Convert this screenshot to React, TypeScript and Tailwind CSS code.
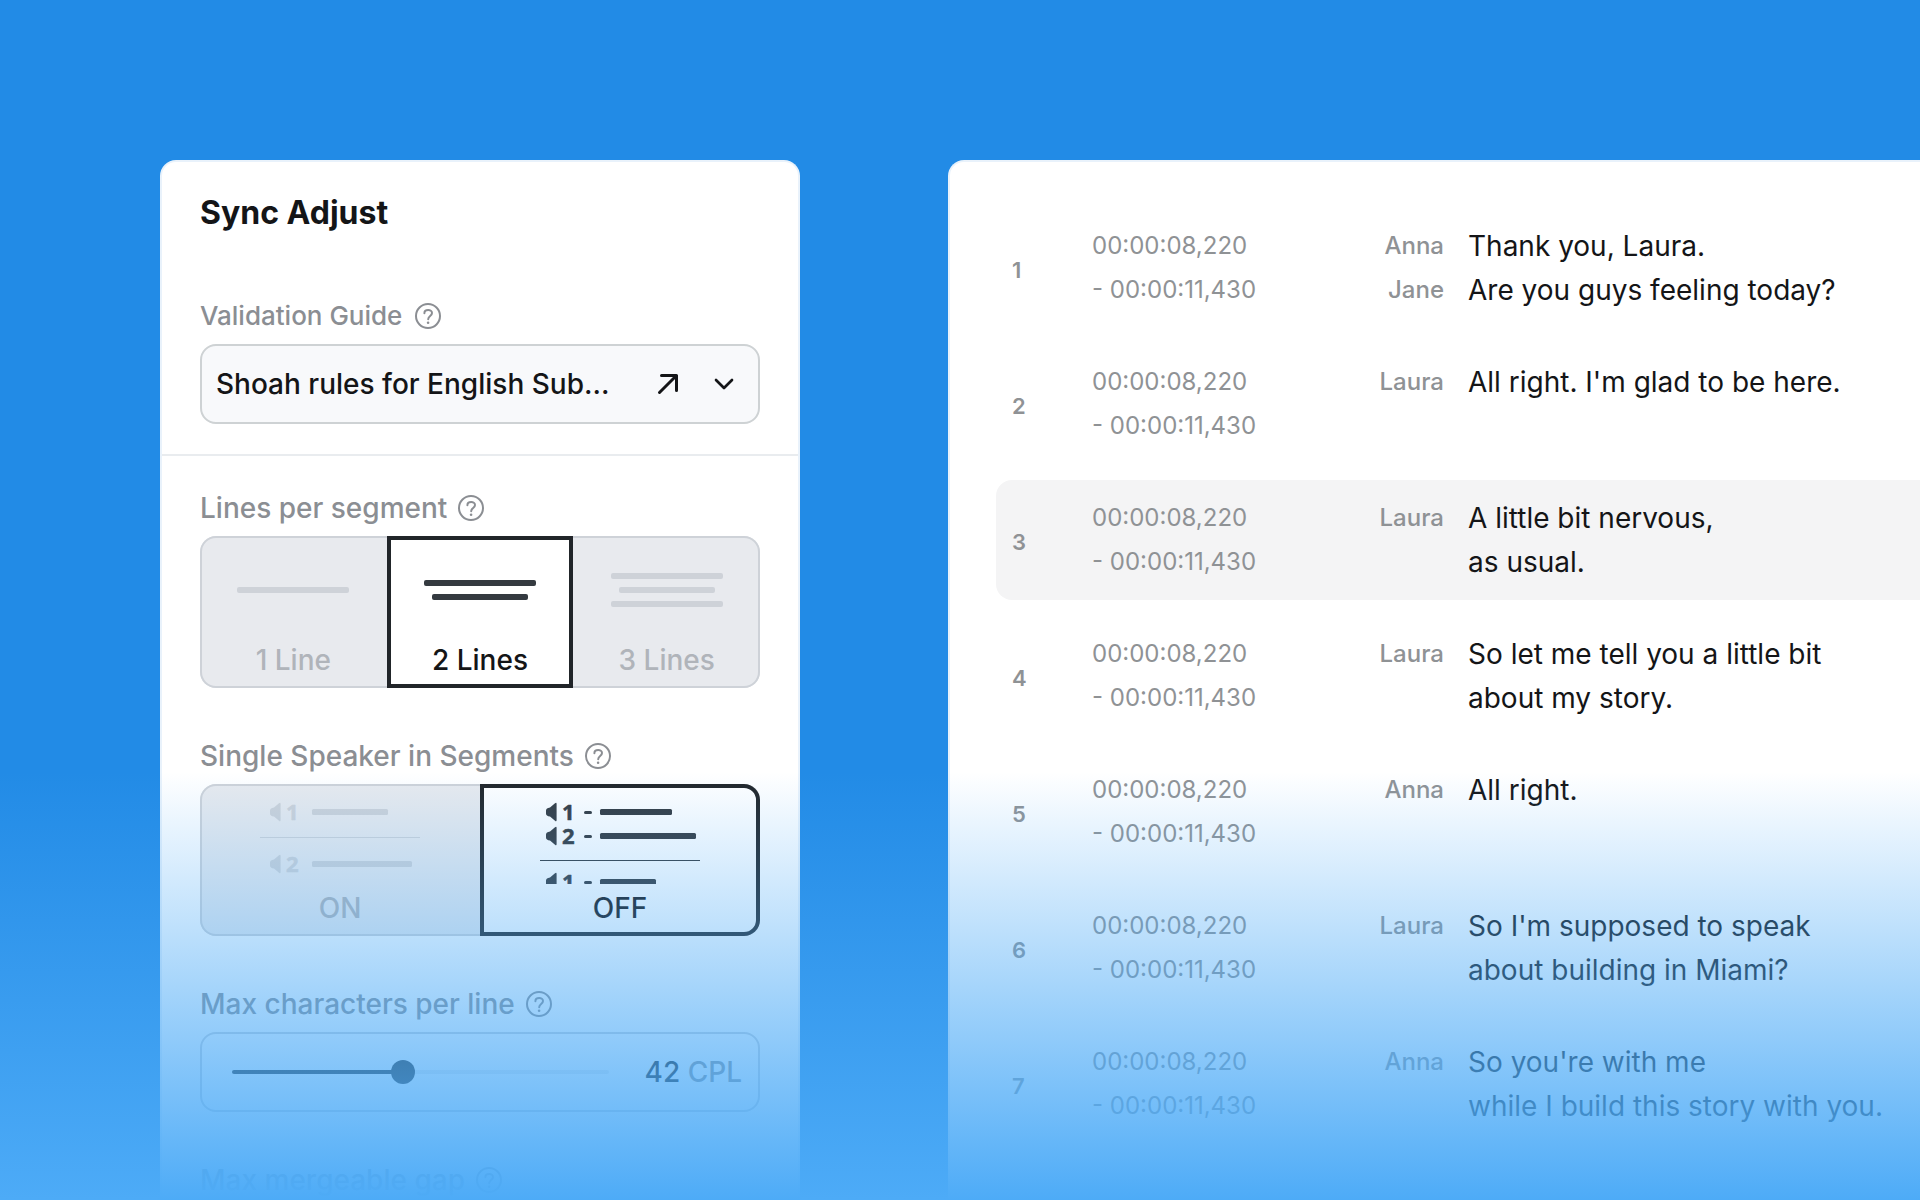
import { type ReactElement, type ReactNode, useState } from 'react';
import { ChevronDown } from 'lucide-react';
import clsx from 'clsx';

interface Segment {
  id: number;
  speakers: string[];
  lines: string[];
}

const SEGMENTS: Segment[] = [
  { id: 1, speakers: ['Anna', 'Jane'], lines: ['Thank you, Laura.', 'Are you guys feeling today?'] },
  { id: 2, speakers: ['Laura'], lines: ["All right. I'm glad to be here."] },
  { id: 3, speakers: ['Laura'], lines: ['A little bit nervous,', 'as usual.'] },
  { id: 4, speakers: ['Laura'], lines: ['So let me tell you a little bit', 'about my story.'] },
  { id: 5, speakers: ['Anna'], lines: ['All right.'] },
  { id: 6, speakers: ['Laura'], lines: ["So I'm supposed to speak", 'about building in Miami?'] },
  { id: 7, speakers: ['Anna'], lines: ["So you're with me", 'while I build this story with you.'] },
];

const CPL_MIN = 15;
const CPL_MAX = 75;

function HelpIcon(): ReactElement {
  return (
    <svg width="28" height="28" viewBox="0 0 28 28" fill="none" stroke="currentColor" strokeWidth="2">
      <circle cx="14" cy="14" r="12" />
      <path d="M10.4 11.2c0-4.2 7.6-4.2 7.6-.2 0 3-3.8 3-3.8 6.2" strokeLinecap="round" />
      <circle cx="14.1" cy="20.8" r="1.3" fill="currentColor" stroke="none" />
    </svg>
  );
}

interface FieldLabelProps {
  children: ReactNode;
  htmlFor?: string;
  id?: string;
  small?: boolean;
}

function FieldLabel({ children, htmlFor, id, small }: FieldLabelProps): ReactElement {
  return (
    <div className={clsx('mb-2 flex h-10 items-center text-[#8b8e93]', small ? 'gap-3' : 'gap-2.5')}>
      <label
        id={id}
        htmlFor={htmlFor}
        className={clsx('font-medium', small ? 'text-[26px] leading-9' : 'text-[28px] leading-10')}
      >
        {children}
      </label>
      <button type="button" aria-label="Help">
        <HelpIcon />
      </button>
    </div>
  );
}

interface OptionCellProps {
  name: string;
  label: string;
  checked: boolean;
  onSelect: () => void;
  children: ReactNode;
}

function OptionCell({ name, label, checked, onSelect, children }: OptionCellProps): ReactElement {
  return (
    <label
      className={clsx(
        'flex flex-1 cursor-pointer flex-col pb-3 first:rounded-l-2xl last:rounded-r-2xl',
        checked ? 'bg-white text-[#343a40] ring-4 ring-[#212529] ring-inset' : 'text-[#ced2d8]'
      )}
    >
      <input type="radio" name={name} checked={checked} onChange={onSelect} className="sr-only" />
      <span className="flex h-27 flex-col items-center justify-center gap-2">{children}</span>
      <span
        className={clsx('text-center text-[28px] leading-8 font-medium', checked ? 'text-[#141517]' : 'text-[#b0b4ba]')}
      >
        {label}
      </span>
    </label>
  );
}

function LineBars({ count }: { count: number }): ReactElement {
  return (
    <>
      {Array.from({ length: count }, (_, i) => (
        <span key={i} className={clsx('h-1.5 rounded-xs bg-current', i % 2 === 0 ? 'w-28' : 'w-24')} />
      ))}
    </>
  );
}

interface SpeakerRowProps {
  x: number;
  y: number;
  digit: string;
  dash?: boolean;
  barX: number;
  barWidth: number;
}

function SpeakerRow({ x, y, digit, dash, barX, barWidth }: SpeakerRowProps): ReactElement {
  return (
    <g transform={`translate(0 ${y})`}>
      <g transform={`translate(${x} 0)`}>
        <path d="M10.6 -8V8Q10.6 10.2 9 8.8L4 4.6Q0 4 0 1.5V-1.5Q0 -4 4 -4.6L9 -8.8Q10.6 -10.2 10.6 -8Z" />
        <text
          x="16"
          y="8"
          stroke="currentColor"
          strokeWidth="0.5"
          strokeLinejoin="round"
          className="font-['Open_Sans',sans-serif] text-[22px] font-bold"
        >
          {digit}
        </text>
      </g>
      {dash && <rect x="44" y="-1" width="8" height="3" rx="1.5" />}
      <rect x={barX} y="-3" width={barWidth} height="6" rx="1.5" />
    </g>
  );
}

function SyncAdjustPanel(): ReactElement {
  const [guide, setGuide] = useState('shoah-en');
  const [lineCount, setLineCount] = useState(2);
  const [singleSpeaker, setSingleSpeaker] = useState(false);
  const [cpl, setCpl] = useState(42);

  const filled = ((cpl - CPL_MIN) / (CPL_MAX - CPL_MIN)) * 100;

  return (
    <section className="w-160 shrink-0 rounded-t-2xl border-2 border-b-0 border-[#e9f2fb] bg-white">
      <div className="border-b-2 border-[#e9ecef] px-[38px] pt-7 pb-[30px]">
        <h1 className="mb-[60px] text-[32px] leading-[46px] font-bold text-[#141517]">Sync Adjust</h1>

        <FieldLabel htmlFor="guide" small>
          Validation Guide
        </FieldLabel>
        <div className="flex h-20 items-center rounded-2xl border-2 border-[#ced2d4] bg-[#f8f9fb] pr-[18px] pl-3.5 text-[#141517]">
          <select
            id="guide"
            value={guide}
            onChange={(e) => setGuide(e.target.value)}
            className="h-full min-w-0 flex-1 appearance-none text-[28px] font-medium outline-none"
          >
            <option value="shoah-en">Shoah rules for English Sub...</option>
          </select>
          <button type="button" aria-label="Open guide" className="mr-6">
            <svg
              width="32"
              height="32"
              viewBox="0 0 32 32"
              fill="none"
              stroke="currentColor"
              strokeWidth="3"
              strokeLinecap="round"
              strokeLinejoin="round"
            >
              <path d="M7.5 24.5 24.5 7.5M9.5 7.5h15v15" />
            </svg>
          </button>
          <ChevronDown size={32} strokeWidth={2} className="pointer-events-none" />
        </div>
      </div>

      <div className="px-[38px] pt-8">
        <FieldLabel id="lines-label">Lines per segment</FieldLabel>
        <div
          role="radiogroup"
          aria-labelledby="lines-label"
          className="mb-12 flex h-38 rounded-2xl bg-[#e8eaee] ring-2 ring-[#ced2d8] ring-inset"
        >
          {[1, 2, 3].map((n) => (
            <OptionCell
              key={n}
              name="lines"
              label={n === 1 ? '1 Line' : `${n} Lines`}
              checked={lineCount === n}
              onSelect={() => setLineCount(n)}
            >
              <LineBars count={n} />
            </OptionCell>
          ))}
        </div>

        <FieldLabel id="speaker-label">Single Speaker in Segments</FieldLabel>
        <div
          role="radiogroup"
          aria-labelledby="speaker-label"
          className="mb-12 flex h-38 rounded-2xl bg-[#e8eaee] ring-2 ring-[#ced2d8] ring-inset"
        >
          <OptionCell name="speaker" label="ON" checked={singleSpeaker} onSelect={() => setSingleSpeaker(true)}>
            <svg width="160" height="92" viewBox="0 0 160 92" fill="currentColor">
              <SpeakerRow x={10} y={20} digit="1" barX={52} barWidth={76} />
              <rect y="45" width="160" height="1" />
              <SpeakerRow x={10} y={72} digit="2" barX={52} barWidth={100} />
            </svg>
          </OptionCell>
          <OptionCell name="speaker" label="OFF" checked={!singleSpeaker} onSelect={() => setSingleSpeaker(false)}>
            <svg width="160" height="92" viewBox="0 0 160 92" fill="currentColor">
              <SpeakerRow x={6} y={20} digit="1" dash barX={60} barWidth={72} />
              <SpeakerRow x={6} y={44} digit="2" dash barX={60} barWidth={96} />
              <rect y="68" width="160" height="1" />
              <SpeakerRow x={6} y={90} digit="1" dash barX={60} barWidth={56} />
            </svg>
          </OptionCell>
        </div>

        <FieldLabel htmlFor="cpl">Max characters per line</FieldLabel>
        <div className="mb-12 flex h-20 items-center gap-9 rounded-2xl border-2 border-[#ced2d8] pr-4 pl-[30px] text-[28px] font-medium">
          <input
            id="cpl"
            type="range"
            min={CPL_MIN}
            max={CPL_MAX}
            value={cpl}
            onChange={(e) => setCpl(Number(e.target.value))}
            style={{ background: `linear-gradient(to right, #212529 ${filled}%, #e9ecef ${filled}%)` }}
            className="h-1 min-w-0 flex-1 appearance-none rounded-full [&::-webkit-slider-thumb]:size-6 [&::-webkit-slider-thumb]:appearance-none [&::-webkit-slider-thumb]:rounded-full [&::-webkit-slider-thumb]:bg-[#212529]"
          />
          <output htmlFor="cpl" className="text-[#141517]">
            {cpl} <span className="text-[#8b8e93]">CPL</span>
          </output>
        </div>

        <FieldLabel>Max mergeable gap</FieldLabel>
      </div>
    </section>
  );
}

function SegmentTable(): ReactElement {
  const [activeId, setActiveId] = useState(3);

  return (
    <section className="min-w-0 flex-1 rounded-tl-2xl border-t-2 border-l-2 border-[#e9f2fb] bg-white pt-[30px] pl-[46px]">
      <table className="w-full table-fixed border-separate border-spacing-x-0 border-spacing-y-4 text-2xl leading-11 text-[#8f9295]">
        <colgroup>
          <col className="w-24" />
          <col className="w-50" />
          <col className="w-38" />
          <col />
        </colgroup>
        <tbody>
          {SEGMENTS.map((segment) => (
            <tr
              key={segment.id}
              onClick={() => setActiveId(segment.id)}
              className={clsx(segment.id === activeId && 'bg-[#f4f4f5]')}
            >
              <td className="rounded-l-2xl pt-1 pl-4 text-[22px] font-semibold">{segment.id}</td>
              <td className="py-4">
                <div>00:00:08,220</div>
                <div>- 00:00:11,430</div>
              </td>
              <td className="py-4 text-right align-top font-medium">
                {segment.speakers.map((speaker) => (
                  <div key={speaker}>{speaker}</div>
                ))}
              </td>
              <td className="py-4 pl-6 align-top text-[28px] whitespace-nowrap text-[#141517]">
                {segment.lines.map((line) => (
                  <div key={line}>{line}</div>
                ))}
              </td>
            </tr>
          ))}
        </tbody>
      </table>
    </section>
  );
}

export default function App(): ReactElement {
  return (
    <main className="relative flex h-screen gap-37 overflow-hidden bg-[#228be6] pt-40 pl-40 font-['Inter',sans-serif]">
      <SyncAdjustPanel />
      <SegmentTable />
      <div className="pointer-events-none absolute inset-x-0 bottom-0 h-107 bg-linear-to-b from-[#4dabf7]/0 to-[#4dabf7]" />
    </main>
  );
}
